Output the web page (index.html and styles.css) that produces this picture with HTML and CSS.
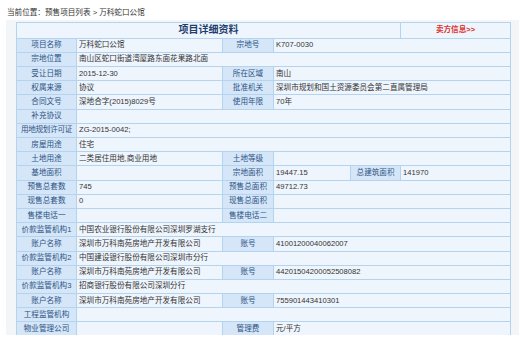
FILE: index.html
```html
<!DOCTYPE html>
<html lang="zh-CN">
<head>
<meta charset="utf-8">
<title>项目详细资料</title>
<link rel="stylesheet" href="styles.css">
</head>
<body>
<div class="viewport">
  <div class="crumb">当前位置：预售项目列表 &gt; 万科蛇口公馆</div>
  <div class="panel">
    <table class="detail">
      <colgroup>
        <col class="c1"><col class="c2"><col class="c3"><col class="c4"><col class="c5"><col class="c6">
      </colgroup>
      <tr class="head">
        <td colspan="5" class="title">项目详细资料</td>
        <td class="seller">卖方信息&gt;&gt;</td>
      </tr>
      <tr><th>项目名称</th><td>万科蛇口公馆</td><th>宗地号</th><td colspan="3">K707-0030</td></tr>
      <tr><th>宗地位置</th><td colspan="5">南山区蛇口街道湾厦路东面花果路北面</td></tr>
      <tr><th>受让日期</th><td>2015-12-30</td><th>所在区域</th><td colspan="3">南山</td></tr>
      <tr><th>权属来源</th><td>协议</td><th>批准机关</th><td colspan="3">深圳市规划和国土资源委员会第二直属管理局</td></tr>
      <tr><th>合同文号</th><td>深地合字(2015)8029号</td><th>使用年限</th><td colspan="3">70年</td></tr>
      <tr><th>补充协议</th><td colspan="5"></td></tr>
      <tr><th class="tight">用地规划许可证</th><td colspan="5">ZG-2015-0042;</td></tr>
      <tr><th>房屋用途</th><td colspan="5">住宅</td></tr>
      <tr><th>土地用途</th><td>二类居住用地,商业用地</td><th>土地等级</th><td colspan="3"></td></tr>
      <tr><th>基地面积</th><td></td><th>宗地面积</th><td>19447.15</td><th>总建筑面积</th><td>141970</td></tr>
      <tr><th>预售总套数</th><td>745</td><th>预售总面积</th><td colspan="3">49712.73</td></tr>
      <tr><th>现售总套数</th><td>0</td><th>现售总面积</th><td colspan="3"></td></tr>
      <tr><th>售楼电话一</th><td></td><th>售楼电话二</th><td colspan="3"></td></tr>
      <tr><th>价款监管机构1</th><td colspan="5">中国农业银行股份有限公司深圳罗湖支行</td></tr>
      <tr><th>账户名称</th><td>深圳市万科南苑房地产开发有限公司</td><th>账号</th><td colspan="3">41001200040062007</td></tr>
      <tr><th>价款监管机构2</th><td colspan="5">中国建设银行股份有限公司深圳市分行</td></tr>
      <tr><th>账户名称</th><td>深圳市万科南苑房地产开发有限公司</td><th>账号</th><td colspan="3">44201504200052508082</td></tr>
      <tr><th>价款监管机构3</th><td colspan="5">招商银行股份有限公司深圳分行</td></tr>
      <tr><th>账户名称</th><td>深圳市万科南苑房地产开发有限公司</td><th>账号</th><td colspan="3">755901443410301</td></tr>
      <tr><th>工程监管机构</th><td colspan="5"></td></tr>
      <tr><th>物业管理公司</th><td></td><th>管理费</th><td colspan="3">元/平方</td></tr>
    </table>
  </div>
</div>
</body>
</html>
```

FILE: styles.css
```css
html, body {
  margin: 0;
  padding: 0;
  background: #ffffff;
}

body {
  font-family: "Liberation Sans", "Noto Sans CJK SC", sans-serif;
  font-size: 7.6px;
  color: #333333;
}

.viewport {
  height: 335px;
  overflow: hidden;
}

.crumb {
  height: 12px;
  padding: 8px 0 0 7px;
  line-height: 10px;
  color: #333333;
}

.panel {
  margin-left: 6px;
  padding: 2px 9px 0 10px;
  background: #f3f6f9;
  height: 400px;
}

.detail {
  width: 494px;
  table-layout: fixed;
  border-collapse: collapse;
  border: 1px solid #a9cdee;
}

.c1 { width: 60px; }
.c2 { width: 146px; }
.c3 { width: 51px; }
.c4 { width: 77px; }
.c5 { width: 50px; }
.c6 { width: 110px; }

.detail tr {
  height: 14.2px;
}

.detail th,
.detail td {
  border: 1px solid #b3d3ef;
  padding: 0 0 0 2px;
  line-height: 12px;
  white-space: nowrap;
  overflow: hidden;
  text-align: left;
  vertical-align: middle;
}

.detail td {
  background: #eef5fd;
  color: #333333;
}

.detail th {
  background: #d4e6f8;
  color: #2d5383;
  font-weight: normal;
  text-align: center;
  padding: 0;
}

.detail th.tight {
  letter-spacing: -0.3px;
}

.detail .head {
  height: 15.7px;
}

.detail .title {
  text-align: center;
  font-size: 10px;
  font-weight: bold;
  color: #1e3d6b;
  padding: 0;
}

.detail .seller {
  text-align: center;
  color: #e0322f;
  font-weight: bold;
  padding: 0;
}
```
